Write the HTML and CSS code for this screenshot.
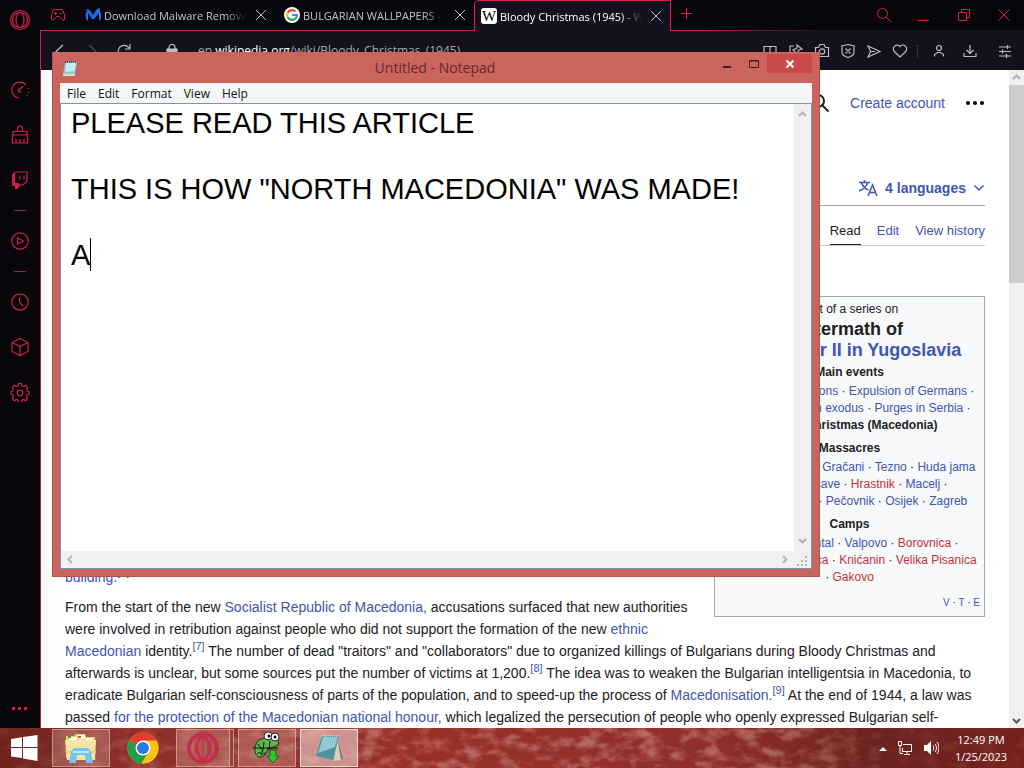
FILE: index.html
```
<!DOCTYPE html>
<html lang="en">
<head>
  <meta charset="UTF-8">
  <meta name="viewport" content="width=device-width, initial-scale=1.0">
  <title>Bloody Christmas (1945) - Wikipedia</title>
  <link rel="stylesheet" href="styles.css">
</head>
<body>
  <div class="browser">
    <nav class="sidebar" aria-label="Sidebar">
      <a href="#" class="opera" aria-label="Opera menu"><svg width="22" height="22" viewBox="0 0 22 22"><circle cx="11" cy="11" r="9.5"/><circle cx="11" cy="11" r="7.5"/><ellipse cx="11" cy="11" rx="4" ry="7.5"/></svg></a>
      <a href="#" aria-label="GX Control"><svg width="20" height="20" viewBox="0 0 20 20"><path d="M9 18A8 8 0 1 1 16 5M18 8v1M18.500 12v1M17 15v1M9 10l4-4M9 9a1.500 1.500 0 1 0 2 2"/></svg></a>
      <a href="#" aria-label="Cleaner"><svg width="20" height="20" viewBox="0 0 20 20"><path d="M7.500 6V3.500a2.500 2.500 0 0 1 5 0V6M3 10V6.500h14V10M2.500 10h15v8h-15zM6 18v-4M10 18v-4M14 18v-4"/></svg></a>
      <a href="#" aria-label="Twitch"><svg width="20" height="20" viewBox="0 0 20 20"><path class="fill" d="M2 5 5 2v11h4v2l3-2-5 6H5v-3H2z"/><path d="M5 2h12v9l-4 4h-3l-3 3v-3H3V5zM10 5.500v4M14 5.500v4"/></svg></a>
      <hr>
      <a href="#" aria-label="Player"><svg width="20" height="20" viewBox="0 0 20 20"><circle cx="10" cy="10" r="8.200"/><path d="M7.500 7v6l6-3z"/></svg></a>
      <hr>
      <a href="#" aria-label="History"><svg width="20" height="20" viewBox="0 0 20 20"><circle cx="10" cy="10" r="8.200"/><path d="M9.500 5v5l3.500 4"/></svg></a>
      <a href="#" aria-label="Extensions"><svg width="20" height="20" viewBox="0 0 20 20"><path d="M10 1.500 18 5.500v9l-8 4-8-4v-9zM2 5.500l8 4 8-4M10 9.500v9"/></svg></a>
      <a href="#" aria-label="Settings"><svg width="20" height="20" viewBox="0 0 20 20"><path d="M8.500 1.500h3l.5 2.300 1.500.7 2.200-1.200 2.100 2.100-1.200 2.200.7 1.400 1.700.5v3l-1.900.5-.6 1.500 1.200 2.100-2.100 2.100-2.100-1.200-1.500.6-.5 2.400h-3l-.5-2.400-1.500-.6-2.100 1.200-2.100-2.100L3.500 14.500 2.900 13 1 12.500v-3L2.700 9l.7-1.400-1.200-2.200 2.100-2.100 2.200 1.200L8 3.800z"/><circle cx="10" cy="11" r="2.800"/></svg></a>
      <a href="#" class="more" aria-label="More"><svg width="20" height="6" viewBox="0 0 20 6"><path class="fill" d="M2 2h3v3H2zM8 2h3v3H8zM14 2h3v3h-3z"/></svg></a>
    </nav>

    <div class="main">
      <div class="tabs">
        <button class="gx" aria-label="GX Corner"><svg width="16" height="14" viewBox="0 0 16 14"><path d="M3.500 1.500h9l2 5.500v4.500l-1.500 1-3.500-4h-3l-3.500 4-1.500-1V7zM4 5.500h3M5.500 4v3M10 5.500h2"/></svg></button>
        <a href="#" class="tab">
          <svg width="16" height="16" viewBox="0 0 16 16"><path fill="#1d6cf0" d="M1 2c4 0 5 3 7 6 2-3 3-6 7-7v4c2 2 2 7-1 9V6L9 12H7L3 6v8C0 12 0 6 2 4z"/></svg>
          <span>Download Malware Removal</span>
          <svg class="x" width="10" height="10" viewBox="0 0 10 10"><path d="M0 0l10 10M10 0 0 10"/></svg>
        </a>
        <a href="#" class="tab">
          <svg width="16" height="16" viewBox="0 0 16 16"><circle cx="8" cy="8" r="8" fill="#fff"/><g fill="none" stroke-width="2.200"><path stroke="#ea4335" d="M11.500 4.500A5 5 0 0 0 3.600 5.700"/><path stroke="#fbbc05" d="M3.600 5.700a5 5 0 0 0 0 4.600"/><path stroke="#34a853" d="M3.600 10.300a5 5 0 0 0 7.800 1.300"/><path stroke="#4285f4" d="M11.400 11.600A5 5 0 0 0 13 8H8"/></g></svg>
          <span>BULGARIAN WALLPAPERS - Google</span>
          <svg class="x" width="10" height="10" viewBox="0 0 10 10"><path d="M0 0l10 10M10 0 0 10"/></svg>
        </a>
        <a href="#" class="tab active">
          <b class="wiki">W</b>
          <span>Bloody Christmas (1945) - Wikipedia</span>
          <svg class="x" width="10" height="10" viewBox="0 0 10 10"><path d="M0 0l10 10M10 0 0 10"/></svg>
        </a>
        <button class="new-tab" aria-label="New tab"><svg width="11" height="11" viewBox="0 0 11 11"><path d="M5.500 0v11M0 5.500h11"/></svg></button>
        <div class="window-buttons">
          <button aria-label="Search tabs"><svg width="16" height="16" viewBox="0 0 16 16"><circle cx="6.500" cy="6.500" r="5"/><path d="m10 10 5 5"/></svg></button>
          <button aria-label="Minimize"><svg width="14" height="16" viewBox="0 0 14 16"><path d="M1 13.500h11"/></svg></button>
          <button aria-label="Restore"><svg width="14" height="14" viewBox="0 0 14 14"><path d="M1.500 4.500h8v8h-8zM4.500 4V1.500h8v8H10"/></svg></button>
          <button aria-label="Close"><svg width="14" height="14" viewBox="0 0 14 14"><path d="M1.500 1.500l11 11M12.500 1.500l-11 11"/></svg></button>
        </div>
      </div>

      <div class="toolbar">
        <button aria-label="Back"><svg width="16" height="16" viewBox="0 0 16 16"><path d="M11 2 4 8.500l7 6"/></svg></button>
        <button class="off" aria-label="Forward"><svg width="16" height="16" viewBox="0 0 16 16"><path d="m5 2 7 6.500-7 6"/></svg></button>
        <button aria-label="Reload"><svg width="16" height="16" viewBox="0 0 16 16"><path d="M13.500 11A6 6 0 1 1 13 5M14 1v5H9"/></svg></button>
        <svg class="lock" width="12" height="14" viewBox="0 0 12 14"><path d="M3 6V3.500a3 3 0 0 1 6 0V6"/><path class="fill" d="M1 5h10v8H1z"/></svg>
        <a href="#" class="url">en.<b>wikipedia.org</b>/wiki/Bloody_Christmas_(1945)</a>
        <div class="tools">
          <button aria-label="Reader"><svg width="16" height="16" viewBox="0 0 16 16"><path d="M8 3.500v10M2 13.500v-10h12v10M1 13.500h14"/></svg></button>
          <button aria-label="Pin"><svg width="16" height="16" viewBox="0 0 16 16"><path d="M6 3H2v11h11V9M9 2l5 4-3 1-2 4-4-4 4-2zM7 9l-3 3"/></svg></button>
          <button aria-label="Snapshot"><svg width="16" height="16" viewBox="0 0 16 16"><path d="M1.500 4.500h3l1.500-3h4l1.500 3h3v9h-13z"/><circle cx="8" cy="8.500" r="2.700"/></svg></button>
          <button aria-label="Blocker"><svg width="16" height="16" viewBox="0 0 16 16"><path d="M8 1.500 14 3v6c0 2.500-2.500 4.500-6 5.500C4.500 13.500 2 11.500 2 9V3zM5.500 5.500l5 5M10.500 5.500l-5 5"/></svg></button>
          <button aria-label="My Flow"><svg width="16" height="16" viewBox="0 0 16 16"><path d="m2 3 12 5.500L2 14l2.500-5.500zM4.500 8.500H9"/></svg></button>
          <button aria-label="Bookmark"><svg width="16" height="16" viewBox="0 0 16 16"><path d="M8 14 2.300 8.500a3.600 3.600 0 0 1 5.700-5 3.600 3.600 0 0 1 5.700 5z"/></svg></button>
          <i></i>
          <button aria-label="Profile"><svg width="16" height="16" viewBox="0 0 16 16"><circle cx="8" cy="5" r="2.500"/><path d="M3.500 13.500v-2l3-2h3l3 2v2"/></svg></button>
          <button class="wide" aria-label="Downloads"><svg width="16" height="16" viewBox="0 0 16 16"><path d="M8 2v8M4.500 7 8 10.500 11.500 7M2 10v3.500h12V10"/></svg></button>
          <button class="wide" aria-label="Easy setup"><svg width="16" height="16" viewBox="0 0 16 16"><path d="M2 4h12M2 8.500h12M2 13h12M10.500 2v4M5.500 6.500v4M9.500 11v4"/></svg></button>
        </div>
      </div>

      <div class="page">
        <main class="content">
          <div class="user-links">
            <svg width="20" height="20" viewBox="0 0 20 20"><circle cx="8" cy="8" r="6"/><path d="m12.500 12.500 6 6"/></svg>
            <a href="#">Create account</a>
            <button aria-label="More options"><svg width="20" height="6" viewBox="0 0 20 6"><circle cx="3" cy="3" r="2"/><circle cx="10" cy="3" r="2"/><circle cx="17" cy="3" r="2"/></svg></button>
          </div>
          <div class="title-bar">
            <button class="languages">
              <svg width="20" height="18" viewBox="0 0 20 18"><path d="M1 3.500h11M6.500 1v2.500M3.500 3.500c1 4 3.500 6 7 7.500M9.500 3.500C9 7 6 10 1 12M10 17l4.500-11L19 17M11.500 13.500h6"/></svg>
              4 languages
              <svg width="12" height="8" viewBox="0 0 12 8"><path d="m1.500 1.500 4.500 4.500 4.500-4.500"/></svg>
            </button>
          </div>
          <div class="page-tabs">
            <a href="#" class="selected">Read</a>
            <a href="#">Edit</a>
            <a href="#">View history</a>
          </div>

          <article>
            <aside class="series">
              <p>Part of a series on</p>
              <h2>Aftermath of<br><a href="#">World War II in Yugoslavia</a></h2>
              <h3>Main events</h3>
              <p><a href="#">Bleiburg repatriations</a> · <a href="#">Expulsion of Germans</a> ·<br><a href="#">Istrian–Dalmatian exodus</a> · <a href="#">Purges in Serbia</a> ·<br><b>Bloody Christmas (Macedonia)</b></p>
              <h3>Massacres</h3>
              <p><a href="#">Bačka</a> · <a href="#">Bleiburg</a> · <a href="#">Gračani</a> · <a href="#">Tezno</a> · <a href="#">Huda jama</a><br><a href="#">Barbara Pit cave</a> · <a href="#" class="red">Hrastnik</a> · <a href="#">Macelj</a> ·<br><a href="#">Lokve</a> · <a href="#">Maribor</a> · <a href="#">Pečovnik</a> · <a href="#">Osijek</a> · <a href="#">Zagreb</a></p>
              <h3>Camps</h3>
              <p><a href="#">Filipovo</a> · <a href="#">Sterntal</a> · <a href="#">Valpovo</a> · <a href="#" class="red">Borovnica</a> ·<br>· <a href="#" class="red">Sremska Mitrovica</a> · <a href="#" class="red">Knićanin</a> · <a href="#" class="red">Velika Pisanica</a><br>· <a href="#" class="red">Gakovo</a></p>
              <p class="vte"><a href="#">V</a> · <a href="#">T</a> · <a href="#">E</a></p>
            </aside>
            <div class="lead"><p><a href="#">building.</a><sup><a href="#">[6]</a></sup></p></div>
            <p>From the start of the new <a href="#">Socialist Republic of Macedonia,</a> accusations surfaced that new authorities were involved in retribution against people who did not support the formation of the new <a href="#">ethnic Macedonian</a> identity.<sup><a href="#">[7]</a></sup> The number of dead "traitors" and "collaborators" due to organized killings of Bulgarians during Bloody Christmas and afterwards is unclear, but some sources put the number of victims at 1,200.<sup><a href="#">[8]</a></sup> The idea was to weaken the Bulgarian intelligentsia in Macedonia, to eradicate Bulgarian self-consciousness of parts of the population, and to speed-up the process of <a href="#">Macedonisation.</a><sup><a href="#">[9]</a></sup> At the end of 1944, a law was passed <a href="#">for the protection of the Macedonian national honour,</a> which legalized the persecution of people who openly expressed Bulgarian self-</p>
          </article>
        </main>
        <div class="scrollbar">
          <svg width="15" height="15" viewBox="0 0 15 15"><path d="m4 9 3.500-3.500L11 9"/></svg>
          <div class="thumb"></div>
          <svg class="down" width="15" height="15" viewBox="0 0 15 15"><path d="M4 6l3.500 3.500L11 6"/></svg>
        </div>
      </div>
    </div>
  </div>

  <div class="notepad">
    <div class="titlebar">
      <svg width="18" height="18" viewBox="0 0 18 18"><path fill="#8fc6d8" d="M4 3h12l-2 13H2z"/><path fill="#c9ecf2" d="M5 4h10l-1.500 8-9 1z"/><path fill="#e9dfa0" d="M2 15h12v2H2z"/><path stroke="#456" stroke-dasharray="1 1" stroke-width="2" d="M4 3h12"/></svg>
      <h1>Untitled - Notepad</h1>
      <div class="caption">
        <button aria-label="Minimize"><svg width="12" height="12" viewBox="0 0 12 12"><path d="M2 9h8" stroke-width="2"/></svg></button>
        <button aria-label="Maximize"><svg width="12" height="12" viewBox="0 0 12 12"><path d="M1.500 2.500h9v7h-9zM1 3h10"/></svg></button>
        <button class="close" aria-label="Close"><svg width="10" height="10" viewBox="0 0 10 10"><path d="M1.500 1.500l7 7M8.500 1.500l-7 7" stroke-width="2"/></svg></button>
      </div>
    </div>
    <div class="menu">
      <button>File</button>
      <button>Edit</button>
      <button>Format</button>
      <button>View</button>
      <button>Help</button>
    </div>
    <div class="editor">
      <textarea aria-label="Text" spellcheck="false">PLEASE READ THIS ARTICLE

THIS IS HOW "NORTH MACEDONIA" WAS MADE!

A</textarea>
      <span class="caret"></span>
      <div class="vbar">
        <svg width="15" height="15" viewBox="0 0 15 15"><path d="m4 9 3.500-3.500L11 9"/></svg>
        <svg width="15" height="15" viewBox="0 0 15 15"><path d="M4 6l3.500 3.500L11 6"/></svg>
      </div>
      <div class="hbar">
        <svg width="15" height="15" viewBox="0 0 15 15"><path d="M9 4 5.500 7.500 9 11"/></svg>
        <svg width="15" height="15" viewBox="0 0 15 15"><path d="m6 4 3.500 3.500L6 11"/></svg>
      </div>
      <svg class="grip" width="17" height="17" viewBox="0 0 17 17"><path d="M11 5h2v2h-2zM7 9h2v2H7zM11 9h2v2h-2zM3 13h2v2H3zM7 13h2v2H7zM11 13h2v2h-2z"/></svg>
    </div>
  </div>

  <footer class="taskbar">
    <svg class="texture" width="100%" height="40">
      <filter id="grain"><feTurbulence type="fractalNoise" baseFrequency="0.05 0.09" numOctaves="5" seed="4"/><feColorMatrix values="0 0 0 0 0.85  0 0 0 0 0.5  0 0 0 0 0.42  3 0 0 0 -1.3"/></filter>
      <rect width="100%" height="40" filter="url(#grain)"/>
    </svg>
    <button class="start" aria-label="Start"><svg width="27" height="26" viewBox="0 0 27 26"><path fill="#fff" d="M0 4l11-1.700V12H0zM12 2.100 26.500 0v12H12zM0 13h11v10L0 21.500zM12 13h14.500v13L12 23.500z"/></svg></button>
    <button class="task open" aria-label="File Explorer"><svg width="34" height="32" viewBox="0 0 34 32"><path fill="#e7cf7d" d="M2 4h8l2-2h9l1 3h9v21H2z"/><path fill="#fffbe7" d="M5 5h8v3H5zM14 3h7v4h-7zM22 6h7v3h-7z"/><path fill="#3c9b52" d="M4 4h3v2H4z"/><path fill="#d8553d" d="M14 4h3v2h-3z"/><path fill="#f6e6a2" d="M1 8h31l-1 20H3z"/><path fill="#e9cd73" d="M1 19h31v2H2z"/><path fill="#79c3ec" d="M7 19l3-3h14l3 3 2 12h-7l-1-8h-8l-1 8H5z"/><path fill="#c4e8fa" d="M9 19h16v2H9z"/></svg></button>
    <button class="task" aria-label="Chrome"><svg width="32" height="32" viewBox="0 0 32 32"><circle cx="16" cy="16" r="15.500" fill="#fbc116"/><path fill="#e33b2e" d="M16 16 2.600 8.200a15.500 15.500 0 0 1 26.800 0z"/><path fill="#249d4a" d="M16 16 2.600 8.200A15.500 15.500 0 0 0 14.500 31.500L22 19z"/><path fill="#fbc116" d="M16 8.500h13.500a15.500 15.500 0 0 1-15 23L22 20z"/><circle cx="16" cy="16" r="7.500" fill="#fff"/><circle cx="16" cy="16" r="6" fill="#2b78e4"/></svg></button>
    <button class="task open stack" aria-label="Opera GX"><svg width="34" height="34" viewBox="0 0 34 34" fill="none" stroke="#c4284a" opacity=".85"><circle cx="17" cy="17" r="14" stroke-width="4"/><ellipse cx="17" cy="17" rx="6" ry="11" stroke-width="3"/><path d="M17 8v18M9 10v14M25 10v14" stroke-width="2" opacity=".6"/></svg></button>
    <button class="task open" aria-label="Chameleon"><svg width="30" height="32" viewBox="0 0 30 32"><path fill="#58b848" stroke="#153d16" d="M3 20C2 10 8 6 15 6l3-4 7 5 2 5-5 3-6 1-2 6-4-3c-2 2 1 4 3 3-1 5-9 4-10-2z"/><path stroke="#111" fill="none" d="M1 16h25M6 12l5 7M12 10l-1 8M18 9l-1 9M5 22c3-3 6 0 4 2"/><circle cx="16" cy="4" r="4" fill="#fff" stroke="#222"/><circle cx="23" cy="5" r="4" fill="#fff" stroke="#222"/><circle cx="17" cy="4" r="1.500"/><circle cx="23" cy="5" r="1.500"/><path fill="#2bc52d" stroke="#176419" d="M18 18h6v6h3l-6 7-6-7h3z"/></svg></button>
    <button class="task open current" aria-label="Notepad"><svg width="32" height="30" viewBox="0 0 32 30"><path fill="#80786a" d="M24 4l6 22-8 2z"/><path fill="#d5d1bd" d="M24 3l4 24-7 1z"/><path fill="#4f91a1" d="M9 3h17l-6 24-17-4z"/><path fill="#92c8d3" d="M10 4h15l-3 10L5 20z"/><path stroke="#e9f4f4" stroke-dasharray="1 1" d="M9 3h17"/></svg></button>

    <div class="tray">
      <button aria-label="Show hidden icons"><svg width="8" height="5" viewBox="0 0 8 5"><path fill="#fff" d="M0 5l4-4 4 4z"/></svg></button>
      <svg width="16" height="16" viewBox="0 0 16 16" fill="none" stroke="#fff"><path d="M6 4.500h8.500v7H5.500V8M10 12v2M7 14.500h6M1.500 1.500h3v4h-3zM3 6v7.500h3"/></svg>
      <svg width="16" height="16" viewBox="0 0 16 16"><path fill="#fff" d="M1 5h3l4-4v14l-4-4H1z"/><path fill="none" stroke="#fff" d="M10 5.500c1 1.500 1 3.500 0 5M12 4c2 2.500 2 5.500 0 8M14 2c2.500 3.500 2.500 8.500 0 12"/></svg>
      <time>12:49 PM<br>1/25/2023</time>
    </div>
  </footer>
</body>
</html>
```
FILE: styles.css
```
* { box-sizing: border-box; margin: 0; padding: 0; }
body { height: 100vh; display: grid; grid-template-rows: minmax(0, 1fr) 40px; overflow: hidden; position: relative; font-family: "Liberation Sans", Arial, sans-serif; color: #202122; }
button { background: none; border: none; font: inherit; color: inherit; display: flex; align-items: center; justify-content: center; }
a { color: #4055b4; text-decoration: none; }
svg { flex: none; }

/* browser */
.browser { display: grid; grid-template-columns: 40px minmax(0, 1fr); background: #07060b; min-height: 0; }
.sidebar { display: flex; flex-direction: column; align-items: center; }
.sidebar a { height: 45px; display: flex; align-items: center; }
.sidebar a.opera { height: 40px; margin-bottom: 27px; }
.sidebar a.more { margin-top: auto; height: 40px; }
.sidebar svg { fill: none; stroke: #cf1f4c; stroke-width: 1.2; }
.sidebar .fill { fill: #cf1f4c; stroke: none; }
.sidebar hr { width: 12px; height: 1px; border: none; background: #a51d40; margin: 8px 0 7px; }

.main { display: flex; flex-direction: column; min-width: 0; min-height: 0; }
.tabs { display: flex; height: 31px; font: 11px "Open Sans", "Noto Sans", sans-serif; }
.tabs svg { fill: none; }
.gx { width: 36px; border-bottom: 1px solid #c2244f; }
.gx svg, .new-tab svg, .window-buttons svg { stroke: #d5234f; }
.tab { width: 199px; display: flex; align-items: center; gap: 3px; padding: 0 9px; color: #c4c3c9; border-bottom: 1px solid #c2244f; white-space: nowrap; }
.tab span { flex: 1; overflow: hidden; margin-right: 6px; -webkit-mask-image: linear-gradient(to right, #000 85%, transparent); mask-image: linear-gradient(to right, #000 85%, transparent); }
.tab .x { stroke: #c4c3c9; }
.tab.active { width: 197px; padding: 0 9px 0 6px; background: #14101d; color: #fff; border: 1px solid #d5234f; border-bottom: none; border-top-left-radius: 5px; }
.wiki { width: 16px; height: 16px; background: #fff; color: #000; border-radius: 3px; font: 15px/16px "Liberation Serif", serif; text-align: center; display: flex; justify-content: center; }
.new-tab { width: 30px; padding-bottom: 3px; border-bottom: 1px solid #c2244f; }
.window-buttons { flex: 1; display: flex; justify-content: flex-end; border-bottom: 1px solid; border-image: linear-gradient(to right, #c2244f, #14101d 40%) 1; }
.window-buttons button { width: 40px; }

.toolbar { height: 39px; display: flex; align-items: center; padding-left: 3px; background: #14101d; border-left: 1px solid #c2244f; color: #a9a7b4; }
.toolbar svg { fill: none; stroke: #bdbbc8; stroke-width: 1.2; }
.toolbar button { width: 32px; }
.toolbar .off { opacity: .35; }
.toolbar .lock { margin: 0 20px 0 26px; }
.toolbar .fill { fill: #bdbbc8; }
.url { font: 12px "Open Sans", "Noto Sans", sans-serif; color: #a9a7b4; }
.url b { font-weight: 400; color: #fff; }
.tools { margin-left: auto; display: flex; align-items: center; padding-right: 2px; }
.tools button { width: 26px; }
.tools i { width: 1px; height: 12px; border-left: 1px dotted #4b4857; margin: 0 8px 0 4px; }
.tools .wide { width: 35px; }

/* article */
.page { flex: 1; min-height: 0; display: flex; background: #fff; border-left: 1px solid #c2244f; overflow: hidden; }
.content { flex: 1; min-width: 0; padding: 0 24px; }
.user-links { height: 66px; display: flex; align-items: center; justify-content: flex-end; gap: 20px; font-size: 14px; }
.user-links > svg { fill: none; stroke: #202122; stroke-width: 2; }
.title-bar { height: 70px; border-bottom: 1px solid #a2a9b1; display: flex; justify-content: flex-end; align-items: flex-end; padding-bottom: 8px; }
.languages { gap: 7px; font-size: 14px; font-weight: 700; color: #4055b4; }
.languages svg { fill: none; stroke: #4055b4; stroke-width: 1.5; }
.page-tabs { height: 40px; display: flex; justify-content: flex-end; gap: 16px; border-bottom: 1px solid #c8ccd1; font-size: 13px; line-height: 49px; }
.page-tabs .selected { color: #202122; border-bottom: 1px solid #202122; }
article { padding-top: 50px; font-size: 14px; line-height: 22px; }
.series { float: right; width: 271px; height: 321px; margin: 0 0 7px 22px; padding: 4px; border: 1px solid #a2a9b1; background: #f8f9fa; text-align: center; font-size: 12px; line-height: 17px; white-space: nowrap; }
.series h2 { font-size: 18px; line-height: 21px; margin-top: 1px; }
.series h3 { font-size: 12px; line-height: 18px; margin: 5px 0 2px; }
.series h2 + h3 { margin-top: 2px; }
.series .red { color: #c2323b; }
.series .vte { margin-top: 8px; font-size: 10px; text-align: right; }
.lead { height: 292px; display: flex; align-items: flex-end; margin-bottom: 8px; }
sup { font-size: 11px; line-height: 1; }

.scrollbar { width: 15px; background: #f0f0f0; display: flex; flex-direction: column; }
.scrollbar svg, .vbar svg, .hbar svg { fill: none; stroke: #b4b4b4; stroke-width: 2; }
.scrollbar .down { margin-top: auto; stroke: #555; }
.thumb { height: 198px; background: #cdcdcd; }

/* notepad window */
.notepad { position: absolute; left: 52px; top: 52px; width: 75%; height: 525px; padding: 0 7px 7px; display: flex; flex-direction: column; background: #c9655d; border: 1px solid #b0564f; border-width: 0 1px 1px; }
.titlebar { height: 31px; display: flex; align-items: center; padding-left: 1px; }
.titlebar h1 { flex: 1; padding-left: 78px; text-align: center; font: 14px "Open Sans", "Noto Sans", sans-serif; color: #6d2826; }
.caption { display: flex; align-self: flex-start; margin-top: 2px; }
.caption button { width: 27px; height: 19px; }
.caption svg { fill: none; stroke: #4b1d1c; }
.caption .close { width: 45px; background: #c94a4c; }
.caption .close svg { stroke: #fff; }
.menu { height: 20px; display: flex; gap: 12px; padding-left: 7px; background: #f5f6f7; font: 12px "Open Sans", "Noto Sans", sans-serif; color: #111; }
.editor { position: relative; flex: 1; min-height: 0; display: grid; grid-template-columns: minmax(0, 1fr) 17px; grid-template-rows: minmax(0, 1fr) 17px; background: #fff; border: 1px solid #7397bb; }
.editor textarea { border: none; outline: none; resize: none; overflow: hidden; padding: 3px 10px; font: 29px/33px "Liberation Sans", Arial, sans-serif; color: #000; }
.caret { position: absolute; left: 29px; top: 134px; width: 1px; height: 33px; background: #000; }
.vbar, .hbar { display: flex; justify-content: space-between; align-items: center; background: #f0f0f0; }
.vbar { flex-direction: column; padding: 3px 0; }
.hbar { padding: 0 2px; }
.grip { background: #f0f0f0; fill: #b4b4b4; }

/* taskbar */
.taskbar { position: relative; display: flex; align-items: center; background: linear-gradient(to right, #6e211d, #8c2f29 12%, #973029 40%, #8f2f2a 70%, #6c211f 86%, #75211e); overflow: hidden; }
.texture { position: absolute; left: 0; top: 0; opacity: .4; -webkit-mask-image: linear-gradient(to right, #0003, #000 35%, #000 75%, #0003 90%); mask-image: linear-gradient(to right, #0003, #000 35%, #000 75%, #0003 90%); }
.taskbar button, .tray { position: relative; }
.start { width: 48px; height: 40px; margin-right: 4px; }
.task { width: 58px; height: 38px; margin-right: 4px; }
.open { background: rgba(224, 170, 160, .35); border: 1px solid rgba(235, 190, 180, .6); }
.stack { width: 54px; margin-right: 8px; box-shadow: 4px 0 0 -1px #8e4740, 4px 0 0 rgba(235, 190, 180, .6); }
.current { background: rgba(235, 200, 195, .65); border-color: #f4dcd8; }
.tray { margin-left: auto; display: flex; align-items: center; gap: 10px; padding-right: 17px; color: #fff; font: 11px/17px "Open Sans", "Noto Sans", sans-serif; text-align: center; }
.tray time { margin-left: 6px; }
```
